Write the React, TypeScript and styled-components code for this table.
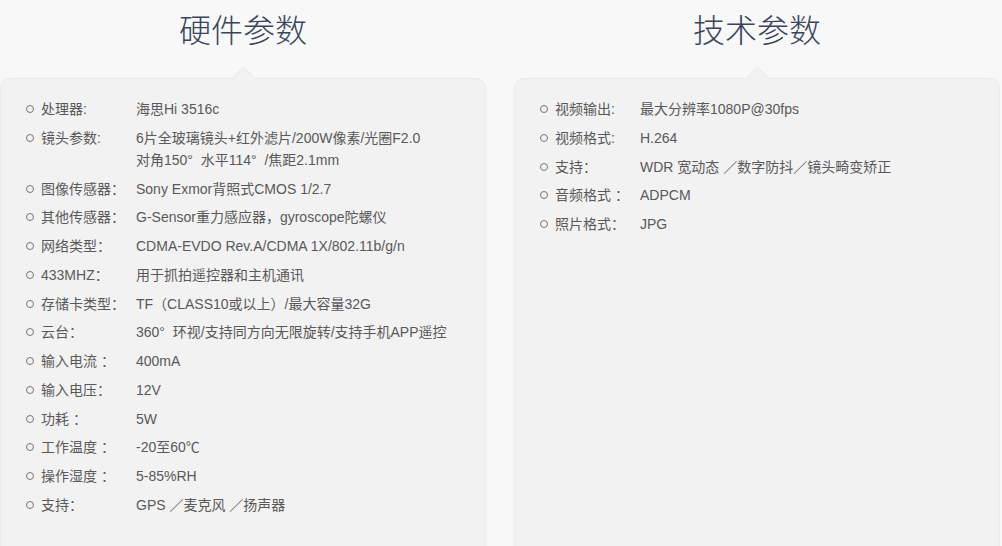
import React from "react";
import styled, { createGlobalStyle } from "styled-components";

const GlobalStyle = createGlobalStyle`
    html, body {
        margin: 0;
        padding: 0;
        background: #f8f8f8;
        overflow: hidden;
    }
    body {
        font-family: "Liberation Sans", "Noto Sans CJK SC", sans-serif;
    }
`;

type Spec = { label: string; value: string[] };

const hardware: Spec[] = [
    { label: "处理器:", value: ["海思Hi 3516c"] },
    { label: "镜头参数:", value: ["6片全玻璃镜头+红外滤片/200W像素/光圈F2.0", "对角150°  水平114°  /焦距2.1mm"] },
    { label: "图像传感器：", value: ["Sony Exmor背照式CMOS 1/2.7"] },
    { label: "其他传感器：", value: ["G-Sensor重力感应器，gyroscope陀螺仪"] },
    { label: "网络类型：", value: ["CDMA-EVDO Rev.A/CDMA 1X/802.11b/g/n"] },
    { label: "433MHZ：", value: ["用于抓拍遥控器和主机通讯"] },
    { label: "存储卡类型：", value: ["TF（CLASS10或以上）/最大容量32G"] },
    { label: "云台：", value: ["360°  环视/支持同方向无限旋转/支持手机APP遥控"] },
    { label: "输入电流 ：", value: ["400mA"] },
    { label: "输入电压：", value: ["12V"] },
    { label: "功耗 ：", value: ["5W"] },
    { label: "工作温度 ：", value: ["-20至60℃"] },
    { label: "操作湿度 ：", value: ["5-85%RH"] },
    { label: "支持：", value: ["GPS ／麦克风 ／扬声器"] },
];

const tech: Spec[] = [
    { label: "视频输出:", value: ["最大分辨率1080P@30fps"] },
    { label: "视频格式:", value: ["H.264"] },
    { label: "支持：", value: ["WDR 宽动态 ／数字防抖／镜头畸变矫正"] },
    { label: "音频格式 ：", value: ["ADPCM"] },
    { label: "照片格式：", value: ["JPG"] },
];

const SpecList = ({ items, labelWidth }: { items: Spec[]; labelWidth: number }) => (
    <List>
        {items.map((s) => (
            <Item key={s.label}>
                <Bullet />
                <Label $width={labelWidth}>{s.label}</Label>
                <Value>
                    {s.value.map((v) => (
                        <div key={v}>{v}</div>
                    ))}
                </Value>
            </Item>
        ))}
    </List>
);

const App = () => {
    return (
        <>
            <GlobalStyle />
            <Page>
                <Column>
                    <Title>硬件参数</Title>
                    <Panel>
                        <SpecList items={hardware} labelWidth={95} />
                    </Panel>
                </Column>
                <Column>
                    <Title>技术参数</Title>
                    <Panel>
                        <SpecList items={tech} labelWidth={85} />
                    </Panel>
                </Column>
            </Page>
        </>
    );
};

const Page = styled.div`
    display: flex;
    gap: 28px;
    width: 1000px;
    height: 546px;
`;

const Column = styled.section`
    width: 486px;
    display: flex;
    flex-direction: column;
`;

const Title = styled.h2`
    flex: none;
    margin: 0;
    padding-top: 5px;
    height: 78px;
    box-sizing: border-box;
    text-align: center;
    font-family: "Noto Sans CJK SC", sans-serif;
    font-weight: 300;
    font-size: 32px;
    line-height: 46px;
    color: #38455a;
`;

const Panel = styled.div`
    position: relative;
    flex: 1;
    background: #f2f2f2;
    border: 1px solid #e7ecee;
    border-bottom: none;
    border-radius: 10px 10px 0 0;
    padding: 19px 0 40px 25px;

    &::before {
        content: "";
        position: absolute;
        top: -9px;
        left: 50%;
        width: 16px;
        height: 16px;
        margin-left: -8px;
        background: #f2f2f2;
        border-top: 1px solid #e7ecee;
        border-left: 1px solid #e7ecee;
        transform: rotate(45deg);
    }
`;

const List = styled.ul`
    list-style: none;
    margin: 0;
    padding: 0;
    display: flex;
    flex-direction: column;
    gap: 6.75px;
`;

const Item = styled.li`
    display: flex;
    align-items: flex-start;
    font-size: 14px;
    line-height: 22px;
    color: #595959;
`;

const Bullet = styled.span`
    flex: none;
    width: 6px;
    height: 6px;
    margin: 7px 7px 0 0;
    border: 1px solid #777;
    border-radius: 50%;
`;

const Label = styled.span<{ $width: number }>`
    flex: none;
    width: ${(p) => p.$width}px;
    white-space: pre;
`;

const Value = styled.div`
    white-space: pre;
`;

export default App;
